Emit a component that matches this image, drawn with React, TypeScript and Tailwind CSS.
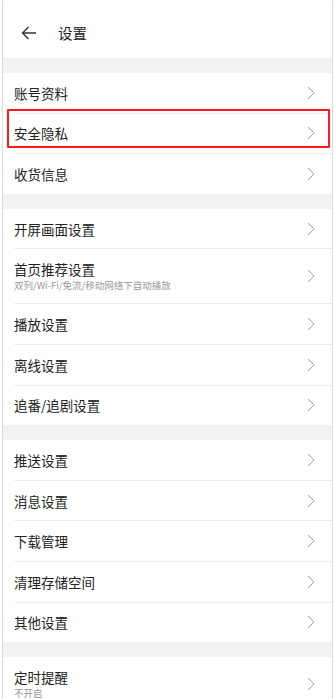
type Item = {
  title: string;
  sub?: string;
  marked?: boolean;
};

const GROUPS: Item[][] = [
  [{ title: "账号资料" }, { title: "安全隐私", marked: true }, { title: "收货信息" }],
  [
    { title: "开屏画面设置" },
    { title: "首页推荐设置", sub: "双列/Wi-Fi/免流/移动网络下自动播放" },
    { title: "播放设置" },
    { title: "离线设置" },
    { title: "追番/追剧设置" },
  ],
  [
    { title: "推送设置" },
    { title: "消息设置" },
    { title: "下载管理" },
    { title: "清理存储空间" },
    { title: "其他设置" },
  ],
  [{ title: "定时提醒", sub: "不开启" }],
];

function Chevron() {
  return (
    <svg width="8" height="14" viewBox="0 0 8 14" fill="none" className="shrink-0">
      <path d="M1 1l6 6-6 6" stroke="#9a9a9a" strokeWidth="1" strokeLinejoin="miter" />
    </svg>
  );
}

function Row({ item, last }: { item: Item; last: boolean }) {
  return (
    <div className="relative">
      <div
        className={`flex items-center justify-between pl-[11px] pr-[17px] ${
          item.sub ? "h-[54px]" : "h-[39.6px]"
        }`}
      >
        <div className="flex flex-col">
          <span className="text-[13.5px] leading-[18px] text-[#222]">{item.title}</span>
          {item.sub && (
            <span className="text-[9.5px] leading-[14px] text-[#999]">{item.sub}</span>
          )}
        </div>
        <Chevron />
      </div>
      {!last && <div className="ml-[11px] h-px bg-[#ededed]" />}
      {item.marked && (
        <div className="absolute -top-[5px] bottom-[6px] left-[4px] right-[2px] rounded-[1px] border-2 border-[#ff1a1a]" />
      )}
    </div>
  );
}

export default function App() {
  return (
    <div
      className="min-h-[699px] w-[335px] overflow-hidden bg-white"
      style={{ fontFamily: '"Noto Sans CJK SC", "Noto Sans", sans-serif' }}
    >
      <div className="mx-[2px] border-x border-[#dcdcdc]">
        <div className="flex h-[58px] items-center bg-white pt-[8px] shadow-[0_2px_3px_rgba(0,0,0,0.04)]">
          <svg width="16" height="14" viewBox="0 0 16 14" fill="none" className="ml-[18px]">
            <path d="M15 7H1.5M7.5 1L1.5 7l6 6" stroke="#333" strokeWidth="1.4" />
          </svg>
          <span className="ml-[21px] text-[14.5px] text-[#222]">设置</span>
        </div>
        {GROUPS.map((group, gi) => (
          <div key={gi}>
            <div className="h-[15px] bg-[#f2f2f2]" />
            {group.map((item, i) => (
              <Row key={item.title} item={item} last={i === group.length - 1} />
            ))}
          </div>
        ))}
      </div>
    </div>
  );
}
